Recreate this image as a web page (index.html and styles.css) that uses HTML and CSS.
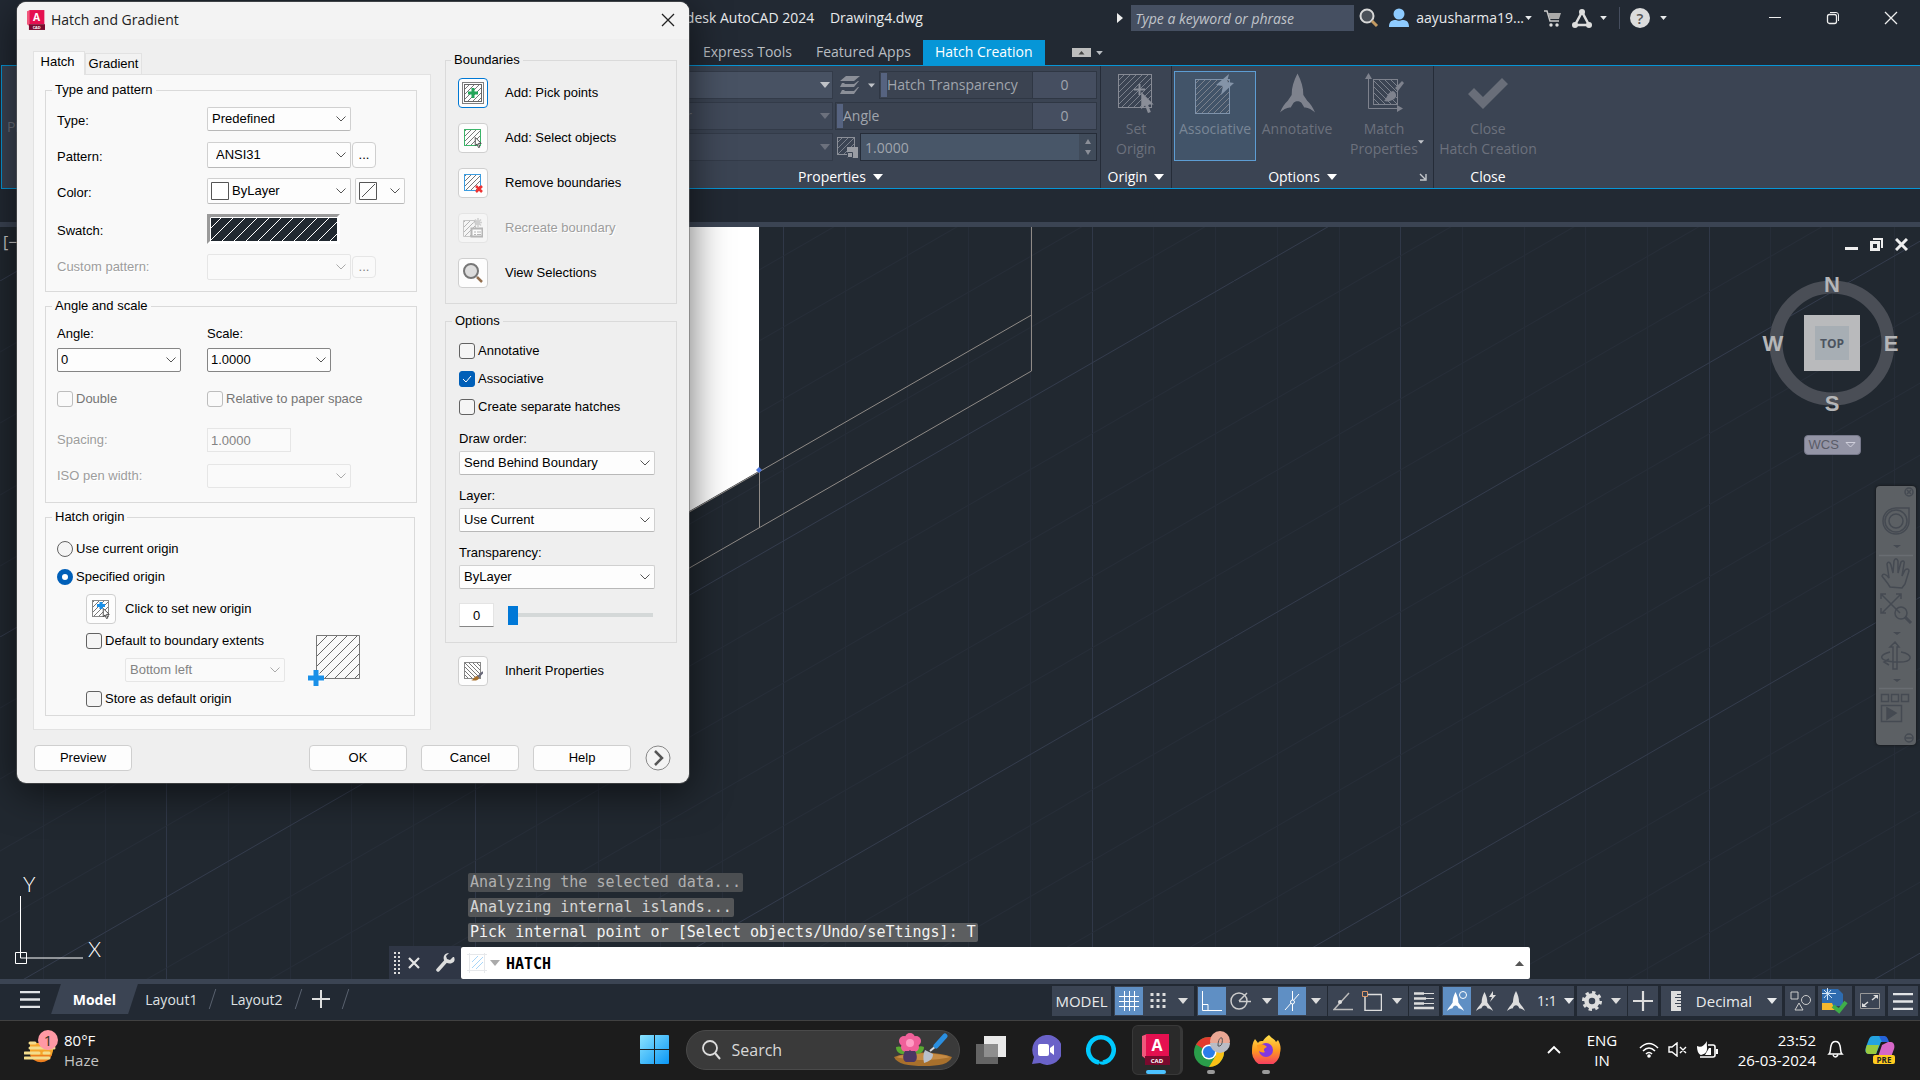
FILE: index.html
```html
<!DOCTYPE html>
<html lang="en">
<head>
<meta charset="utf-8">
<title>Autodesk AutoCAD 2024 - Drawing4.dwg</title>
<link rel="stylesheet" href="styles.css">
</head>
<body>
<svg class="defs" width="0" height="0" aria-hidden="true">
  <defs>
    <pattern id="h-dark" width="5" height="5" patternUnits="userSpaceOnUse"><path d="M-1 6L6-1" stroke="#777" stroke-width="1"/></pattern>
    <pattern id="h-back" width="4" height="4" patternUnits="userSpaceOnUse"><path d="M-1-1L5 5" stroke="#777" stroke-width="1"/></pattern>
    <pattern id="h-light" width="6" height="6" patternUnits="userSpaceOnUse"><path d="M-1 7L7-1" stroke="#7b818c" stroke-width="1"/></pattern>
    <pattern id="h-lback" width="6" height="6" patternUnits="userSpaceOnUse"><path d="M-1-1L7 7" stroke="#7b818c" stroke-width="1"/></pattern>
    <linearGradient id="g-fire" x1="0" y1="0" x2="0" y2="1"><stop offset="0" stop-color="#ffe14a"/><stop offset=".5" stop-color="#ff9a1f"/><stop offset="1" stop-color="#f5316a"/></linearGradient>
    <linearGradient id="g-win" x1="0" y1="0" x2="1" y2="1"><stop offset="0" stop-color="#8be4ff"/><stop offset="1" stop-color="#0a96f5"/></linearGradient>
    <symbol id="acad" viewBox="0 0 28 31">
      <path d="M0 2L5 0v26L0 22z" fill="#f0587c"/><path d="M4 0h23v22H4z" fill="#e51050"/><path d="M3 22h25v9H3z" fill="#7a0a2e"/>
      <text x="15" y="17" text-anchor="middle" font-family="Open Sans" font-weight="700" font-size="16" fill="#fff">A</text>
      <text x="15" y="29" text-anchor="middle" font-family="Open Sans" font-weight="700" font-size="6" fill="#fff">CAD</text>
    </symbol>
    <symbol id="caret" viewBox="0 0 10 6"><path d="M0 0h10L5 6z" fill="currentColor"/></symbol>
    <symbol id="pointer" viewBox="-1 -1 16 24"><path d="M1 0v18l4-4 3 8 3-1-3-8h6z" fill="currentColor"/></symbol>
    <symbol id="anno" viewBox="0 0 36 40"><path d="M18 0c4 8 6 14 6 22l4 6c3 3 6 7 8 12-5-4-8-5-11-5l-3-5c-3-2-5-2-8 0l-3 5c-3 0-6 1-11 5 2-5 5-9 8-12l4-6c0-8 2-14 6-22z" fill="currentColor"/></symbol>
    <symbol id="menu" viewBox="0 0 20 17"><path d="M0 1h20M0 8.500h20M0 16h20" stroke="#e2e4e6" stroke-width="2.500"/></symbol>
  </defs>
</svg>

<header class="titlebar">
  <h1 class="app-title">Autodesk AutoCAD 2024 <span>Drawing4.dwg</span></h1>
  <div class="title-tools">
    <svg class="play" width="6" height="10" viewBox="0 0 6 10"><path d="M0 0l6 5-6 5z" fill="#eee"/></svg>
    <input class="keyword" type="text" placeholder="Type a keyword or phrase" aria-label="Search help">
    <button class="ib w-find" aria-label="Search"><svg width="20" height="20" viewBox="0 0 20 20"><circle cx="8" cy="8" r="6.500" fill="#4a5058" stroke="#d8d8d8" stroke-width="2"/><path d="M13 13l5 5" stroke="#c39a62" stroke-width="3"/></svg></button>
    <button class="account"><svg width="20" height="20" viewBox="0 0 20 20"><circle cx="10" cy="6" r="5.500" fill="#8ecbff"/><path d="M0 19c0-6 3-7 7-7 2 1 4 1 6 0 4 0 7 1 7 7z" fill="#8ecbff"/></svg><span>aayusharma19...</span><svg class="c6" width="7" height="4"><use href="#caret"/></svg></button>
    <button class="ib w-cart" aria-label="Cart"><svg width="17" height="17" viewBox="0 0 17 17"><path d="M0 1h3l3 10h9" fill="none" stroke="#c9c9c9" stroke-width="1.500"/><path d="M4 3h13l-2 6H6z" fill="#aaa"/><circle cx="7" cy="15" r="1.700" fill="#ddd"/><circle cx="13" cy="15" r="1.700" fill="#ddd"/></svg></button>
    <button class="ib w-apps" aria-label="Autodesk App Store"><svg width="20" height="19" viewBox="0 0 20 19"><path d="M10 3L3 16h14z" fill="none" stroke="#ddd" stroke-width="2.500"/><circle cx="10" cy="3" r="3" fill="#ddd"/><circle cx="3" cy="16" r="3" fill="#ddd"/><circle cx="17" cy="16" r="3" fill="#ddd"/></svg><svg width="7" height="4"><use href="#caret"/></svg></button>
    <button class="ib w-help" aria-label="Help"><svg width="20" height="20" viewBox="0 0 20 20"><circle cx="10" cy="10" r="10" fill="#dcdcdc"/><text x="10" y="16" text-anchor="middle" font-family="Open Sans" font-size="15" font-weight="600" fill="#555">?</text></svg><svg width="7" height="4"><use href="#caret"/></svg></button>
    <button class="wb" aria-label="Minimize"><svg width="14" height="14"><path d="M1 6.500h12" stroke="#eee" stroke-width="1"/></svg></button>
    <button class="wb" aria-label="Restore"><svg width="14" height="14"><rect x="1.500" y="3.500" width="9" height="9" rx="2" fill="none" stroke="#eee" stroke-width="1.300"/><path d="M4 1.500h6q2.500 0 2.500 2.500v6" fill="none" stroke="#eee"/></svg></button>
    <button class="wb" aria-label="Close"><svg width="14" height="14"><path d="M1 1l12 12M13 1L1 13" stroke="#eee" stroke-width="1.300"/></svg></button>
  </div>
</header>

<nav class="tabs">
  <a href="#">Express Tools</a>
  <a href="#">Featured Apps</a>
  <a href="#" class="on">Hatch Creation</a>
  <button class="ib w-min" aria-label="Minimize ribbon"><svg width="19" height="9"><path d="M0 0h19v9H0z" fill="#bdbdbd"/><path d="M6.500 6.500h6l-3-3.500z" fill="#444"/></svg><svg width="7" height="4"><use href="#caret"/></svg></button>
</nav>

<section class="ribbon">
  <div class="panel pick"><div class="panel-body"><span>Pick</span></div></div>
  <div class="panel props">
    <div class="panel-body prop-grid">
      <button class="combo lit" aria-label="Hatch color"><svg width="10" height="6"><use href="#caret"/></svg></button>
      <div class="prow">
        <button class="ib w-layers" aria-label="Hatch layer"><svg width="20" height="19" viewBox="0 0 20 19"><path d="M6 0h14l-6 5H0zM2 7h3l-1 1h10l4-3h1l-5 6H0zM2 14h3l-1 1h10l4-4h1l-5 7H0z" fill="#8b8f98"/></svg><svg width="7" height="5"><use href="#caret"/></svg></button>
        <label class="slide">Hatch Transparency</label><output class="val">0</output>
      </div>
      <button class="combo" aria-label="Background color"><span>ByLayer</span><svg width="10" height="6"><use href="#caret"/></svg></button>
      <div class="prow"><label class="slide">Angle</label><output class="val">0</output></div>
      <button class="combo" aria-label="Pattern type"><svg width="10" height="6"><use href="#caret"/></svg></button>
      <div class="prow">
        <svg class="scale-ic" width="21" height="21"><rect x=".5" y=".5" width="17" height="17" fill="url(#h-light)" stroke="#8b8f98"/><path d="M10 10h11v11H10z" fill="#9a9da4"/><path d="M10.500 15.500h5v5h-5z" fill="#9a9da4" stroke="#3b4453"/></svg>
        <input class="scale-in" type="text" value="1.0000" aria-label="Hatch pattern scale">
        <span class="spin"><svg width="6" height="5"><path d="M0 5h6L3 0z" fill="#8b8f98"/></svg><svg width="6" height="5"><path d="M0 0h6L3 5z" fill="#8b8f98"/></svg></span>
      </div>
    </div>
    <div class="panel-name">Properties <svg width="10" height="6"><use href="#caret"/></svg></div>
  </div>
  <div class="panel origin">
    <div class="panel-body">
      <button class="big"><svg width="40" height="42"><rect x="2.500" y="3.500" width="33" height="33" fill="url(#h-light)" stroke="#868a94"/><path d="M18 18.500h11M23.500 13v11" stroke="#8a8e98" stroke-width="2"/><use href="#pointer" x="23" y="20" width="16" height="23" color="#8a8e98"/></svg><span>Set<br>Origin</span></button>
    </div>
    <div class="panel-name">Origin <svg width="10" height="6"><use href="#caret"/></svg></div>
  </div>
  <div class="panel opts">
    <div class="panel-body">
      <button class="big assoc"><svg width="40" height="42"><rect x=".500" y="7.500" width="34" height="34" fill="url(#h-light)" stroke="#7f93ab"/><path d="M34 2L21 13l7 1-2 9 13-12-7-1z" fill="#8494a8"/></svg><span>Associative</span></button>
      <button class="big annot"><svg width="40" height="42"><use href="#anno" x="3" y="2" width="35" height="40" color="#7e828d"/></svg><span>Annotative</span></button>
      <button class="big match"><svg width="40" height="42"><path d="M4.500 5v32.500H36" fill="none" stroke="#7e828d"/><path d="M1 8l3.500-6L8 8zM33 34l6 3.500-6 3.500z" fill="#7e828d"/><rect x="9.500" y="8.500" width="24" height="25" fill="url(#h-lback)" stroke="#7e828d"/><path d="M40 12l-6 8-3-3 7-7zM20 30c3-2 3-9 9-10 4 2 4 6 1 8-3 2-6 3-10 2z" fill="#7e828d"/></svg><span>Match<br>Properties</span><svg class="corner" width="6" height="4"><use href="#caret"/></svg></button>
    </div>
    <div class="panel-name">Options <svg width="10" height="6"><use href="#caret"/></svg><svg class="launch" width="8" height="8"><path d="M1 1l5 5M7 1v6H1" fill="none" stroke="#c5c8cc" stroke-width="1.400"/></svg></div>
  </div>
  <div class="panel close">
    <div class="panel-body">
      <button class="big"><svg width="40" height="42"><path d="M0 23l6-6 9 9L34 7l6 6-25 25z" fill="#696e79"/></svg><span>Close<br>Hatch Creation</span></button>
    </div>
    <div class="panel-name">Close</div>
  </div>
</section>
<div class="filestrip"></div>

<main class="canvas">
  <svg class="drawing" viewBox="0 0 1920 752" preserveAspectRatio="xMinYMin slice" aria-hidden="true">
    <defs>
      <pattern id="iso" x="0" y="54" width="617" height="356" patternUnits="userSpaceOnUse">
        <path d="M43.500 0v356M105.500 0v356M228.500 0v356M290.500 0v356M351.500 0v356M413.500 0v356M536.500 0v356M598.500 0v356" stroke="#262d38"/>
        <path d="M166.500 0v356M475.500 0v356" stroke="#303848"/>
        <path d="M0 71L617-285M0 142L617-214M0 214L617-142M0 285L617-71M0 427L617 71M0 498L617 142M0 570L617 214M0 641L617 285" stroke="#262d38"/>
        <path d="M0 356L617 0" stroke="#333b4c"/>
      </pattern>
    </defs>
    <rect width="1920" height="752" fill="#212830"/>
    <rect width="1920" height="752" fill="url(#iso)"/>
    <path d="M500 0H759V244L500 393z" fill="#fff"/>
    <path d="M1031.500 0V144L500 450M1031.500 88L500 394M759.500 243V301" fill="none" stroke="#8f8a86"/>
    <path d="M759 240l3 3-3 3-3-3z" fill="#4b74d8"/>
    <path d="M20.500 669v62H83M15.500 725.500h11v11h-11z" fill="none" stroke="#fff"/>
    <text x="23" y="665" class="ucs">Y</text><text x="88" y="730" class="ucs">X</text>
    <text x="3" y="21" class="vp">[−]</text>
  </svg>

  <div class="docbtns">
    <button aria-label="Minimize drawing"><svg width="13" height="13"><path d="M0 9h13v3H0z" fill="#eee"/></svg></button>
    <button aria-label="Restore drawing"><svg width="13" height="13"><path d="M1.500 4.500h7v7h-7z" fill="none" stroke="#eee" stroke-width="3"/><path d="M3 1h9v9" fill="none" stroke="#eee" stroke-width="2"/></svg></button>
    <button aria-label="Close drawing"><svg width="13" height="13"><path d="M1 1l11 11M12 1L1 12" stroke="#eee" stroke-width="3"/></svg></button>
  </div>
  <div class="cube">
    <svg width="140" height="148" viewBox="0 0 140 148">
      <circle cx="70" cy="70" r="56" fill="none" stroke="#4a4e56" stroke-width="13"/>
      <path d="M42 42h56v56H42z" fill="#b9babc"/><path d="M53 53h34v34H53z" fill="#a7aeb4"/>
      <g font-family="Liberation Sans" font-weight="700" font-size="22" fill="#b5b6b8" text-anchor="middle"><text x="70" y="19">N</text><text x="70" y="138">S</text><text x="11" y="78">W</text><text x="129" y="78">E</text></g>
      <text x="70" y="75" text-anchor="middle" font-family="Open Sans" font-weight="700" font-size="12" fill="#4c5460">TOP</text>
    </svg>
    <button class="wcs">WCS <svg width="11" height="6" viewBox="0 0 11 6"><path d="M1 .500h9L5.500 5z" fill="none" stroke="#d0d0dc"/></svg></button>
  </div>
  <div class="navbar">
    <svg width="40" height="259" viewBox="0 0 40 259" fill="none" stroke="#454a52" stroke-width="1.500">
      <circle cx="33" cy="6" r="4"/><path d="M31 4l4 4M35 4l-4 4"/>
      <path d="M20 22h13v13a13 13 0 1 1-13-13z"/><circle cx="20" cy="35" r="11"/><circle cx="20" cy="35" r="7"/>
      <path d="M17 59h8l-4 3zM17 146h8l-4 3zM17 193h8l-4 3z" fill="#454a52" stroke="none"/>
      <path d="M3 69.500h34M3 202.500h34" stroke="#696d72"/>
      <path d="M14 101c-3-5-6-8-8-11 1-3 4-2 7 2l-2-14c1-3 3-2 4 1l2 8 1-12c1-3 3-3 4 0v12l3-11c2-2 4-1 3 2l-2 12 3-6c2-2 4-1 4 1l-4 13-3 4z"/>
      <path d="M6 109l18 18M24 109L6 127M5 113v-5h5M20 108h5v5M5 122v5h5"/><circle cx="25" cy="127" r="6"/><path d="M29 131l6 6" stroke-width="3"/>
      <path d="M19 156l4 5h-2v22h-4v-22h-3zM14 166c-12 3-12 9 6 10s18-8 5-10M13 173l-5 3 5 3"/>
      <path d="M5.500 208.500h7v7h-7zM15.500 208.500h7v7h-7zM25.500 208.500h7v7h-7zM5.500 219.500h20v16h-20z"/><path d="M11 222l9 5-9 6z" fill="#454a52"/>
      <circle cx="33" cy="252" r="4"/><path d="M30 252h6"/>
    </svg>
  </div>

  <div class="command">
    <ul class="history"><li class="old">Analyzing the selected data...</li><li class="mid">Analyzing internal islands...</li><li>Pick internal point or [Select objects/Undo/seTtings]: T</li></ul>
    <div class="cmdline">
      <div class="cmdtools">
        <svg width="6" height="22"><path d="M1 0v22M5 0v22" stroke="#ddd" stroke-width="2" stroke-dasharray="2 2"/></svg>
        <button class="ib" aria-label="Close command line"><svg width="12" height="12"><path d="M1 1l10 10M11 1L1 11" stroke="#e4e4e4" stroke-width="2.200"/></svg></button>
        <button class="ib" aria-label="Customize"><svg width="19" height="19" viewBox="0 0 19 19"><path d="M2 17L10 8" stroke="#ddd" stroke-width="3.500" stroke-linecap="round"/><path d="M17 4l-3 3-3-1-1-3 3-3c-5 0-6 4-5 7 2 4 6 4 8 3 3-1 3-4 2-6z" fill="#ddd"/></svg></button>
      </div>
      <div class="cmdbox">
        <svg width="20" height="20"><path d="M0 1.500h20M0 17.500h20M2.500 0v20M17.500 0v20" stroke="#e6e8eb"/><path d="M5 9l6-6M5 15L16 4M9 16l7-7" stroke="#a8d6f8"/></svg>
        <svg class="grey" width="10" height="6"><use href="#caret"/></svg>
        <input type="text" value="HATCH" aria-label="Command">
        <svg width="9" height="5"><path d="M0 5h9L4.500 0z" fill="#555"/></svg>
      </div>
    </div>
  </div>
</main>

<div class="statusbar">
  <div class="layouts">
    <button class="ib w-menu" aria-label="Layout menu"><svg width="20" height="17"><use href="#menu"/></svg></button>
    <a href="#" class="model"><span>Model</span></a>
    <a href="#">Layout1</a><i class="slash"></i><a href="#">Layout2</a><i class="slash"></i>
    <button class="ib w-plus" aria-label="New layout"><svg width="18" height="18"><path d="M9 0v18M0 9h18" stroke="#dedede" stroke-width="2"/></svg></button><i class="slash"></i>
  </div>
  <div class="status">
    <div class="sg"><button class="model-btn">MODEL</button></div>
    <div class="sg"><button class="si on" aria-label="Grid"><svg width="20" height="20"><path d="M5.500 0v20M10.500 0v20M15.500 0v20M0 5.500h20M0 10.500h20M0 15.500h20" stroke="#fff"/></svg></button><button class="si" aria-label="Snap"><svg width="16" height="16"><path d="M2 0v16M8 0v16M14 0v16" stroke="#ddd" stroke-width="3" stroke-dasharray="3 3"/></svg></button><button class="sc" aria-label="Snap menu"><svg width="10" height="6"><use href="#caret"/></svg></button></div>
    <div class="sg"><button class="si on" aria-label="Ortho"><svg width="20" height="20"><path d="M.5 0v19.500H20M.5 13.500h5.500v6" fill="none" stroke="#fff"/></svg></button><button class="si" aria-label="Polar"><svg width="22" height="20"><circle cx="9" cy="10" r="8" fill="none" stroke="#ccc" stroke-width="1.500"/><path d="M9 10.500h12M9 10l8-8" stroke="#ccc" stroke-width="1.500"/></svg></button><button class="sc roomy" aria-label="Polar menu"><svg width="10" height="6"><use href="#caret"/></svg></button><button class="si on" aria-label="Isometric"><svg width="20" height="20"><path d="M10.500 0v20M3 19L17 3" stroke="#fff"/><circle cx="10.500" cy="11" r="2" fill="#5f8fc4" stroke="#fff"/></svg></button><button class="sc" aria-label="Isometric menu"><svg width="10" height="6"><use href="#caret"/></svg></button></div>
    <div class="sg join"><button class="si" aria-label="Tracking"><svg width="20" height="20"><path d="M20 18.500H1L16 2" fill="none" stroke="#bbb" stroke-width="1.500"/><circle cx="7" cy="11" r="2" fill="#ddd"/></svg></button><button class="si" aria-label="Object snap"><svg width="20" height="20"><path d="M6 3.500h13.500v16H3V6" fill="none" stroke="#ddd" stroke-width="1.500"/><path d="M.5.500h5v5h-5z" fill="none" stroke="#e09a6a"/></svg></button><button class="sc" aria-label="Snap settings"><svg width="10" height="6"><use href="#caret"/></svg></button></div>
    <div class="sg join"><button class="si" aria-label="Lineweight"><svg width="20" height="18"><path d="M0 1.500h10M0 6.500h12M0 11.500h10M0 16h20" stroke="#ddd" stroke-width="2.500"/><path d="M10 1.500h10M12 6.500h8M10 11.500h10" stroke="#ddd"/></svg></button></div>
    <div class="sg"><button class="si on" aria-label="Annotation visibility"><svg width="20" height="20"><use href="#anno" x="0" y="1" width="17" height="19" color="#fff"/><circle cx="16" cy="4" r="3.500" fill="#5f8fc4" stroke="#fff"/></svg></button><button class="si" aria-label="Auto scale"><svg width="20" height="20"><use href="#anno" x="0" y="1" width="17" height="19" color="#ddd"/><path d="M17 0l-4 6h3l-2 5 6-7h-3z" fill="#ddd"/></svg></button><button class="si" aria-label="Annotation scale"><svg width="18" height="20"><use href="#anno" width="18" height="20" color="#ddd"/></svg></button><button class="ratio">1:1 <svg width="10" height="6"><use href="#caret"/></svg></button></div>
    <div class="sg"><button class="si" aria-label="Workspace"><svg width="20" height="20"><circle cx="10" cy="10" r="8.500" fill="none" stroke="#ddd" stroke-width="3" stroke-dasharray="3.300 3.350"/><circle cx="10" cy="10" r="5.500" fill="none" stroke="#ddd" stroke-width="4.500"/></svg></button><button class="sc" aria-label="Workspace menu"><svg width="10" height="6"><use href="#caret"/></svg></button></div>
    <div class="sg join"><button class="si" aria-label="Annotation monitor"><svg width="20" height="20"><path d="M10 0v20M0 10h20" stroke="#ddd" stroke-width="2.200"/></svg></button></div>
    <div class="sg"><button class="units"><svg width="10" height="20"><path d="M0 0h10v20H0z" fill="#ddd"/><path d="M6 3.500h4M4 6.500h6M6 9.500h4M4 12.500h6M6 15.500h4" stroke="#3b4453"/></svg><span>Decimal</span><svg width="10" height="6"><use href="#caret"/></svg></button></div>
    <div class="sg"><button class="si" aria-label="Isolate"><svg width="21" height="20"><path d="M1 1h7v7H1zM5 19l4-7 4 7z" fill="none" stroke="#ccc"/><circle cx="16" cy="9" r="4.500" fill="none" stroke="#ccc"/></svg></button></div>
    <div class="sg"><button class="si wide" aria-label="Trusted file"><svg width="26" height="26"><path d="M0 1h16l5 5v12H0z" fill="#2e6cb0"/><path d="M0 5.500h14M5.500 0v12M2 2l8 8M9 2l-7 8" stroke="#cfe4f7"/><path d="M0 15h10l3 7H0z" fill="#f5b82e"/><path d="M11 18l6 5 7-9" fill="none" stroke="#3fae49" stroke-width="4"/></svg></button></div>
    <div class="sg"><button class="si" aria-label="Clean screen"><svg width="20" height="16"><path d="M.5.500h19v15H.5z" fill="none" stroke="#999"/><path d="M12 7l5-4M8 9l-5 4" stroke="#ddd" stroke-width="1.500"/><path d="M13 2h5v4zM2 10v4h5z" fill="#ddd"/></svg></button></div>
    <div class="sg"><button class="si" aria-label="Customization"><svg width="20" height="17"><use href="#menu"/></svg></button></div>
  </div>
</div>

<footer class="taskbar">
  <button class="weather">
    <svg width="34" height="38" viewBox="0 0 34 38"><path d="M6 24a12 12 0 0 0 23-3v-8H6z" fill="#f5a52c"/><path d="M6 25a12 12 0 0 0 22 0z" fill="#ee7f1e"/><path d="M6 13h5M6 18h24M1 23h14M20 23h5M1 28h24" stroke="#f3dc8c" stroke-width="3" stroke-linecap="round"/><circle cx="24" cy="10" r="10" fill="#ff99a4"/><text x="24" y="16" text-anchor="middle" font-family="Open Sans" font-size="15" fill="#332">1</text></svg>
    <span>80°F<br><em>Haze</em></span>
  </button>
  <div class="apps">
    <button class="app" aria-label="Start"><svg width="29" height="29"><path d="M0 1q0-1 1-1h13v14H0zM15 0h13q1 0 1 1v13H15zM0 15h14v14H1q-1 0-1-1zM15 15h14v13q0 1-1 1H15z" fill="url(#g-win)"/></svg></button>
    <div class="search"><svg width="20" height="20"><circle cx="8" cy="8" r="7" fill="none" stroke="#ddd" stroke-width="1.800"/><path d="M13 13l5 6" stroke="#ddd" stroke-width="2"/></svg><input type="search" placeholder="Search" aria-label="Search">
      <svg width="60" height="34" viewBox="0 0 60 34"><path d="M1 24c16-6 42-6 58 0-3 7-12 9-28 9S4 31 1 24z" fill="#a8702c"/><path d="M3 24c16-5 38-5 54 0-14 4-40 4-54 0z" fill="#c58b45"/><path d="M3 14c6-2 9 2 10 7-6 1-10-2-10-7zM22 20c1-6 5-8 9-6 0 5-4 8-9 6z" fill="#5aa832"/><g fill="#f0609a"><circle cx="17" cy="5" r="5"/><circle cx="11" cy="8" r="5"/><circle cx="23" cy="8" r="5"/><circle cx="13" cy="14" r="5"/><circle cx="21" cy="14" r="5"/></g><circle cx="17" cy="10" r="4" fill="#ff9cc4"/><path d="M12 18h10c3 5 2 10-1 11h-8c-3-1-4-6-1-11z" fill="#4b3763"/><path d="M32 17l8 4c0 5-3 7-9 9-1-5-1-9 1-13z" fill="#b9c0cc"/><path d="M37 18l6-5" stroke="#d8dde5" stroke-width="2"/><path d="M43 13l9-10" stroke="#2b8fe0" stroke-width="5" stroke-linecap="round"/></svg></div>
    <button class="app" aria-label="Task view"><svg width="30" height="30"><path d="M8 1h22v21H8z" fill="#e9e9e9"/><path d="M0 9h22v20H0z" fill="#777" opacity=".8"/></svg></button>
    <button class="app" aria-label="Chat"><svg width="30" height="30"><path d="M15 0a15 15 0 1 1-6 28l-8 1 2-7A15 15 0 0 1 15 0z" fill="#6a62c8"/><rect x="7" y="9" width="11" height="12" rx="2" fill="#fff"/><path d="M19 13l4-3v10l-4-3z" fill="#fff"/></svg></button>
    <button class="app" aria-label="Alexa"><svg width="30" height="30"><path d="M13 27.500A12.700 12.700 0 1 1 17 27.500q-2 0-2-1" fill="none" stroke="#00caff" stroke-width="4.500"/></svg></button>
    <button class="app active" aria-label="AutoCAD"><svg width="28" height="31"><use href="#acad"/></svg></button>
    <button class="app open" aria-label="Chrome"><svg width="38" height="38" viewBox="0 0 38 38"><circle cx="17" cy="21" r="15" fill="#2a9d4a"/><path d="M17 21L4 13.500A15 15 0 0 1 30 13.500H17z" fill="#e33b2e"/><path d="M17 13.500h13A15 15 0 0 1 17 36l6.500-11z" fill="#fbc116"/><circle cx="17" cy="21" r="7.500" fill="#fff"/><circle cx="17" cy="21" r="6" fill="#2b7de9"/><circle cx="28" cy="10" r="10" fill="#e9a794"/><path d="M18 12a10 10 0 0 0 20 0z" fill="#b9bcc6"/><path d="M26 15c0-6 2-9 4-8 1 3 0 7-2 8z" fill="none" stroke="#555"/></svg></button>
    <button class="app open" aria-label="Firefox"><svg width="29" height="29" viewBox="0 0 29 29"><path d="M17 0c2 3 6 4 7 7l2-2c3 5 3 9 2 13a14 14 0 0 1-28-2C0 10 1 7 3 4l3 4c1-2 3-2 5-2 1-2 3-4 6-6z" fill="url(#g-fire)"/><circle cx="14" cy="15" r="7" fill="#8138e0"/><path d="M5 10c6-2 8 0 10 2-3 1-4 3-2 5-4 2-8-2-8-7z" fill="#ff9a1f"/></svg></button>
  </div>
  <div class="tray">
    <svg class="up" width="14" height="9"><path d="M1 8l6-6 6 6" fill="none" stroke="#fff" stroke-width="1.800"/></svg>
    <span class="lang">ENG<br>IN</span>
    <div class="net">
      <svg width="20" height="16" fill="none" stroke="#fff" stroke-width="1.600"><path d="M1 6q9-9 18 0M4 9q6-6 12 0M7 12q3-3 6 0"/><circle cx="10" cy="14" r="1" fill="#fff"/></svg>
      <svg width="20" height="15" fill="none" stroke="#fff" stroke-width="1.400"><path d="M1 5h3l5-4v13l-5-4H1zM12 5l6 6M18 5l-6 6"/></svg>
      <svg width="21" height="18"><path d="M11 4h5q2 0 2 2v8q0 2-2 2H3" fill="none" stroke="#fff" stroke-width="1.600"/><path d="M10 0C9 6 13 12 4 14 1 13 0 9 0 5c4 2 7 0 10-5zM19 8h2v5h-2z" fill="#fff"/><path d="M8 14l4-7h2v7z" fill="#fff"/></svg>
    </div>
    <span class="clock">23:52<br>26-03-2024</span>
    <svg class="bell" width="17" height="19"><path d="M2 14c2-2 1-5 2-8 1-6 8-6 9 0 1 3 0 6 2 8zM6 15q2 4 5 0" fill="none" stroke="#fff" stroke-width="1.500"/></svg>
    <svg class="copilot" width="31" height="30" viewBox="0 0 31 30"><path d="M8 1h10c3 0 4 3 5 6h-7L11 19H4c-4 0-4-4-3-7L4 4c1-2 2-3 4-3z" fill="#25a3e0"/><path d="M2 10h12l-3 9H4c-4 0-4-4-2-9z" fill="#9acb3f"/><path d="M23 7h3c3 0 4 4 3 7l-3 8H13l4-12z" fill="#d667c8"/><path d="M14 1h5c3 0 4 3 5 6h-7z" fill="#2563d9"/><rect x="8" y="20" width="22" height="9" rx="2" fill="#ffcb1f"/><text x="19" y="28" text-anchor="middle" font-family="Open Sans" font-weight="700" font-size="8" fill="#222">PRE</text></svg>
  </div>
</footer>

<form class="dialog" onsubmit="return false">
  <div class="dlg-title"><svg width="18" height="20"><use href="#acad"/></svg><h2>Hatch and Gradient</h2><button type="button" class="ib" aria-label="Close dialog"><svg width="14" height="14"><path d="M1 1l12 12M13 1L1 13" stroke="#222" stroke-width="1.300"/></svg></button></div>
  <div class="dlg-body">
    <div class="dlg-left">
      <div class="dlg-tabs"><button type="button" class="cur">Hatch</button><button type="button">Gradient</button></div>
      <div class="sheet">
        <fieldset class="f-type">
          <legend>Type and pattern</legend>
          <label for="type">Type:</label><div class="cell"><select id="type" class="w-l"><option>Predefined</option></select></div>
          <label for="pattern">Pattern:</label><div class="cell"><select id="pattern" class="w-l tall pad"><option>ANSI31</option></select><button type="button" class="dots">...</button></div>
          <label for="color">Color:</label><div class="cell wider"><select id="color" class="w-l tall chip"><option>ByLayer</option></select><select class="bgcolor tall" aria-label="Background color"><option></option></select></div>
          <span class="lbl">Swatch:</span><div class="swatch"><svg width="127" height="24"><defs><pattern id="sw" width="12" height="12" patternUnits="userSpaceOnUse"><path d="M-1 13L13-1" stroke="#fff"/></pattern></defs><rect width="127" height="24" fill="#212830"/><rect width="127" height="24" fill="url(#sw)"/><path d="M.500 24V.500H127" fill="none" stroke="#fff"/></svg></div>
          <label for="custom" class="off">Custom pattern:</label><div class="cell"><select id="custom" class="w-l tall" disabled><option></option></select><button type="button" class="dots" disabled>...</button></div>
        </fieldset>
        <fieldset class="f-angle">
          <legend>Angle and scale</legend>
          <label class="head" for="angle">Angle:</label><label class="head" for="scale">Scale:</label>
          <select id="angle" class="w-m strong"><option>0</option></select><select id="scale" class="w-m strong"><option>1.0000</option></select>
          <label class="chk off2"><input type="checkbox" disabled>Double</label><label class="chk off2"><input type="checkbox" disabled>Relative to paper space</label>
          <label for="spacing" class="off">Spacing:</label><input id="spacing" class="w-s" type="text" value="1.0000" disabled>
          <label for="iso-pen" class="off">ISO pen width:</label><select id="iso-pen" class="w-l" disabled><option></option></select>
        </fieldset>
        <fieldset class="f-origin">
          <legend>Hatch origin</legend>
          <label class="chk"><input type="radio" name="o">Use current origin</label>
          <label class="chk"><input type="radio" name="o" checked>Specified origin</label>
          <div class="origin-more">
            <div class="origin-col">
              <label class="tool"><button type="button" aria-label="Click to set new origin"><svg width="20" height="20"><rect x="1.500" y="1.500" width="16" height="16" fill="url(#h-dark)" stroke="#888"/><path d="M6 6.500h8M10 3v7" stroke="#1a90e8" stroke-width="3"/><use href="#pointer" x="11" y="9" width="8" height="11" color="#fff" stroke="#444" stroke-width="2"/></svg></button>Click to set new origin</label>
              <label class="chk"><input type="checkbox">Default to boundary extents</label>
              <select class="corner-sel" aria-label="Boundary corner" disabled><option>Bottom left</option></select>
              <label class="chk"><input type="checkbox">Store as default origin</label>
            </div>
            <svg class="preview" width="52" height="52" viewBox="0 0 52 52"><defs><pattern id="pv" width="10" height="10" patternUnits="userSpaceOnUse"><path d="M-1 11L11-1" stroke="#666"/></pattern></defs><path d="M8.500.500h43v43h-43z" fill="url(#pv)" stroke="#777"/><path d="M0 43h16M8 35v16" stroke="#fff" stroke-width="7"/><path d="M0 43h16M8 35v16" stroke="#1a90e8" stroke-width="5"/></svg>
          </div>
        </fieldset>
      </div>
    </div>
    <div class="dlg-right">
      <fieldset class="f-bounds">
        <legend>Boundaries</legend>
        <label class="tool"><button type="button" class="focus" aria-label="Add: Pick points"><svg width="22" height="22"><rect x=".5" y=".5" width="21" height="21" fill="none" stroke="#000" stroke-dasharray="1 1"/><rect x="2.500" y="2.500" width="17" height="17" fill="url(#h-dark)" stroke="#666"/><path d="M6 11h10M11 6v10" stroke="#23a559" stroke-width="3"/></svg></button>Add: Pick points</label>
        <label class="tool"><button type="button" aria-label="Add: Select objects"><svg width="20" height="20"><rect x="1.500" y="1.500" width="16" height="16" fill="url(#h-dark)" stroke="#3cb56a"/><use href="#pointer" x="11" y="9" width="8" height="11" color="#fff" stroke="#444" stroke-width="2"/></svg></button>Add: Select objects</label>
        <label class="tool"><button type="button" aria-label="Remove boundaries"><svg width="20" height="20"><rect x="1.500" y="1.500" width="16" height="16" fill="url(#h-dark)" stroke="#3c9de0"/><path d="M13 13l6 6M19 13l-6 6" stroke="#e33" stroke-width="2.500"/></svg></button>Remove boundaries</label>
        <label class="tool off"><button type="button" disabled aria-label="Recreate boundary"><svg width="20" height="20" opacity=".5"><path d="M.5 2.500h12v16H.5z" fill="url(#h-dark)" stroke="#999"/><path d="M15 0v9M10 4.500h9M12 1.500l6 6M18 1.500l-6 6" stroke="#aaa" stroke-width="1.500"/><rect x="8.500" y="10.500" width="11" height="8" fill="#fff" stroke="#777" stroke-width="2"/><path d="M11 14h2M14 14h4M11 16.500h2M14 16.500h4" stroke="#777"/></svg></button>Recreate boundary</label>
        <label class="tool"><button type="button" aria-label="View Selections"><svg width="20" height="20"><circle cx="8" cy="8" r="7" fill="#ddd" stroke="#777" stroke-width="2"/><path d="M14 14l5 5" stroke="#947050" stroke-width="2.500"/></svg></button>View Selections</label>
      </fieldset>
      <fieldset class="f-opts">
        <legend>Options</legend>
        <label class="chk"><input type="checkbox">Annotative</label>
        <label class="chk"><input type="checkbox" checked>Associative</label>
        <label class="chk"><input type="checkbox">Create separate hatches</label>
        <div class="field"><label for="order">Draw order:</label><select id="order"><option>Send Behind Boundary</option></select></div>
        <div class="field"><label for="layer">Layer:</label><select id="layer"><option>Use Current</option></select></div>
        <div class="field"><label for="transp">Transparency:</label><select id="transp"><option>ByLayer</option></select></div>
        <div class="trow"><input class="tval" type="text" value="0" aria-label="Transparency value"><input class="tslide" type="range" min="0" max="90" value="0" aria-label="Transparency"></div>
      </fieldset>
      <label class="tool inherit"><button type="button" aria-label="Inherit Properties"><svg width="20" height="20"><rect x="1.500" y="1.500" width="16" height="16" fill="url(#h-back)" stroke="#888"/><path d="M20 11l-6 6" stroke="#667" stroke-width="2"/><path d="M8 19c3 0 3-4 6-4l2 2c-1 3-5 3-8 2z" fill="#a8702c"/></svg></button>Inherit Properties</label>
    </div>
  </div>
  <div class="dlg-foot"><button type="button" class="push">Preview</button><button type="button" class="push first">OK</button><button type="button" class="push">Cancel</button><button type="button" class="push">Help</button><button type="button" class="more" aria-label="More options"><svg width="26" height="26"><circle cx="13" cy="13" r="12" fill="#f3f3f3" stroke="#888"/><path d="M10 6l7 7-7 7" fill="none" stroke="#555" stroke-width="2.500"/></svg></button></div>
</form>
</body>
</html>
```
FILE: styles.css
```css
* { box-sizing: border-box; }
body {
  margin: 0;
  min-height: 100vh;
  display: flex;
  flex-direction: column;
  position: relative;
  background: #222933;
  color: #e8eaec;
  font: 14px/20px "Open Sans", "Noto Sans", sans-serif;
  overflow-x: hidden;
}
button { font: inherit; color: inherit; background: none; border: 0; padding: 0; margin: 0; }
a { color: inherit; text-decoration: none; }
h1, h2 { margin: 0; font-weight: 400; }
svg { display: block; flex: none; }
.defs { position: absolute; }
.ib { display: flex; align-items: center; justify-content: center; gap: 10px; }

/* Title bar */
.titlebar { display: flex; height: 36px; align-items: center; }
.app-title { margin-left: 655px; font-size: 14px; white-space: nowrap; }
.app-title span { margin-left: 12px; }
.title-tools { margin-left: auto; display: flex; align-items: center; }
.keyword {
  width: 223px; height: 26px; margin: 0 5px 0 8px; padding: 0 4px;
  background: #454f61; border: 0; color: #c5c9cf;
  font: italic 14px/20px "Open Sans", sans-serif;
}
.keyword::placeholder { color: #c0c4ca; opacity: 1; }
.w-find { width: 20px; }
.account { display: flex; align-items: center; gap: 7px; margin-left: 10px; }
.account .c6 { margin-left: -6px; }
.w-cart { margin-left: 12px; }
.w-apps { margin-left: 11px; padding-right: 12px; height: 22px; border-right: 1px solid #454d5e; gap: 8px; }
.w-help { margin-left: 10px; margin-right: 79px; }
.wb { width: 58px; display: flex; justify-content: center; }

/* Ribbon tabs */
.tabs { display: flex; height: 29px; align-items: flex-end; padding-left: 691px; color: #b9bdc2; }
.tabs a { padding: 2px 12px 3px; height: 25px; white-space: nowrap; }
.tabs a.on { background: #0696d7; color: #fff; }
.tabs .w-min { height: 25px; margin-left: 27px; gap: 5px; }

/* Ribbon */
.ribbon {
  display: flex; height: 124px; background: #3b4453;
  border-top: 1px solid #0696d7; border-bottom: 1px solid #0696d7; border-left: 1px solid #0696d7;
  margin-left: 1px;
}
.panel { display: flex; flex-direction: column; border-right: 1px solid #252c38; }
.panel-body { flex: 1; display: flex; padding-top: 5px; color: #6c717d; }
.panel-name { position: relative; height: 24px; padding-top: 2px; display: flex; gap: 7px; align-items: center; justify-content: center; color: #fff; }
.pick { width: 579px; }
.pick .panel-body { padding: 51px 0 0 5px; }
.props { width: 520px; }
.prop-grid { display: grid; grid-template-columns: 234px 262px; gap: 3px 2px; padding-left: 18px; padding-top: 5px; align-content: start; }
.combo, .prow { height: 28px; display: flex; align-items: center; }
.combo { justify-content: flex-end; gap: 128px; padding-right: 2px; border: 1px solid #333b49; background: #404959; color: #6c717d; }
.combo.lit { background: #485263; color: #c0c3c8; }
.slide { flex: 1; height: 28px; padding: 3px 0 0 7px; border: 1px solid #2f3744; color: #a0a5ad; background: linear-gradient(#566380, #566380) 1px 1px / 6px 24px no-repeat #3b4351; }
.val { width: 64px; height: 28px; padding-top: 3px; border: 1px solid #2f3744; border-left: 0; text-align: center; color: #a0a5ad; background: #454e60; }
.w-layers { width: 44px; gap: 8px; color: #c0c3c8; }
.scale-ic { margin: 0 2px; }
.scale-in { flex: 1; min-width: 0; height: 28px; padding: 0 4px; border: 1px solid #252c38; border-right: 0; background: #485668; color: #a0a5ad; font: inherit; }
.spin { width: 18px; height: 28px; display: flex; flex-direction: column; gap: 6px; align-items: center; justify-content: center; border: 1px solid #252c38; border-left: 0; background: #404b5a; }
.origin { width: 71px; }
.origin .panel-body, .close .panel-body { justify-content: center; }
.opts { width: 262px; }
.close { width: 108px; border-right: 0; }
.big { position: relative; display: flex; flex-direction: column; align-items: center; gap: 6px; height: 90px; line-height: 20px; white-space: nowrap; }
.assoc { width: 82px; margin-left: 2px; border: 1px solid #5d9dd3; background: #425469; color: #798696; gap: 5px; }
.annot { width: 82px; }
.match { width: 92px; }
.corner { position: absolute; right: 6px; top: 69px; color: #c0c3c8; }
.launch { position: absolute; right: 6px; top: 9px; }
.filestrip { height: 38px; border-bottom: 5px solid #3b4453; }

/* Drawing area */
.canvas { position: relative; flex: 1; min-height: 500px; overflow: hidden; }
.drawing { position: absolute; inset: 0; width: 100%; height: 100%; }
.ucs { font: 300 21px Lato, sans-serif; fill: #fff; }
.vp { font: 16px "Open Sans", sans-serif; fill: #ccc; }
.docbtns { position: absolute; right: 12px; top: 11px; display: flex; gap: 12px; }
.cube { position: absolute; right: 18px; top: 46px; display: flex; flex-direction: column; align-items: center; gap: 14px; }
.wcs { display: flex; align-items: center; justify-content: space-between; height: 20px; width: 57px; padding: 0 4px; border: 1px solid #76788a; border-radius: 4px; background: #9495a6; color: #5a5c68; font: 13px/18px "Liberation Sans", sans-serif; }
.navbar { position: absolute; right: 4px; top: 259px; border-radius: 4px; background: #5c6064; box-shadow: 0 0 3px #111; }

/* Command line */
.command { position: absolute; left: 389px; right: 390px; bottom: 0; font: 15px/19px "DejaVu Sans Mono", monospace; }
.history { list-style: none; margin: 0 0 4px 79px; padding: 0; display: flex; flex-direction: column; align-items: flex-start; gap: 6px; }
.history li { height: 19px; padding: 0 2px; border-radius: 2px; background: #5c5e60; color: #f2f2f2; white-space: nowrap; }
.history .old { background: #4b4e51; color: #b0b0b0; }
.history .mid { background: #545658; color: #d6d6d6; }
.cmdline { display: flex; height: 33px; }
.cmdtools { width: 72px; display: flex; align-items: center; gap: 8px; padding-left: 5px; background: #2f3645; }
.cmdtools .ib:last-child { margin-left: 8px; }
.cmdbox { flex: 1; display: flex; align-items: center; gap: 3px; margin-top: 1px; padding: 0 6px; background: #fff; border-radius: 2px; }
.cmdbox .grey { color: #aaa; }
.cmdbox input { flex: 1; min-width: 0; border: 0; padding: 2px 3px 0; background: none; color: #000; font: 700 15px/19px "DejaVu Sans Mono", monospace; outline: none; }

/* Layout tabs and status bar */
.statusbar { display: flex; justify-content: space-between; height: 42px; border-top: 5px solid #3b4453; border-bottom: 1px solid #414141; background: #222933; }
.layouts { display: flex; height: 30px; align-items: center; color: #dfe1e4; }
.w-menu { margin-left: 20px; }
.layouts a { padding: 3px 9px 2px; }
.layouts .model { display: flex; align-items: center; height: 30px; margin: 0 3px 0 16px; padding: 2px 17px 0; background: #3b4453; color: #fff; font-weight: 700; transform: skewX(-18deg); }
.model span { transform: skewX(18deg); }
.slash { width: 1px; height: 20px; margin: 0 8px 0 6px; background: #5a6270; transform: skewX(-18deg); }
.w-plus { margin: 0 9px 0 5px; }
.status { display: flex; gap: 3px; padding: 2px 2px 0 0; font-size: 15px; }
.sg { display: flex; height: 30px; padding: 1px; background: #3b4453; }
.sg.join { margin-left: -2px; }
.si { width: 28px; height: 28px; display: flex; align-items: center; justify-content: center; }
.si.on { background: #5f8fc4; }
.si + .si { width: 30px; }
.si.wide { width: 32px; }
.sc { width: 20px; display: flex; align-items: center; justify-content: center; color: #ddd; }
.sc.roomy { width: 22px; }
.model-btn { width: 57px; }
.ratio { display: flex; align-items: center; gap: 7px; width: 42px; padding-left: 6px; font-size: 14px; white-space: nowrap; }
.units { display: flex; align-items: center; width: 119px; padding: 0 4px 0 9px; }
.units span { margin: 0 auto; }

/* Taskbar */
.taskbar { display: grid; grid-template-columns: 1fr auto 1fr; height: 59px; padding-bottom: 2px; background: #1c1c1c; align-items: center; font-size: 15px; }
.weather { display: flex; gap: 6px; margin-left: 24px; text-align: left; color: #fff; justify-self: start; }
.weather em { font-style: normal; color: #c4c4c4; }
.apps { display: flex; align-items: center; }
.app { position: relative; width: 55px; height: 50px; display: flex; align-items: center; justify-content: center; }
.app.active { border: 1px solid #383838; border-width: 1px 3px 1px 1px; border-radius: 6px; width: 51px; margin: 0 1px 0 3px; background: #2a2a2a; }
.app.active::after, .app.open::after { content: ""; position: absolute; bottom: 1px; left: 50%; width: 8px; margin-left: -4px; height: 4px; border-radius: 2px; background: #9a9a9a; }
.app.active::after { width: 20px; margin-left: -10px; background: #4cc2ff; bottom: 0; }
.search { width: 274px; height: 40px; margin: 0 4px; padding: 0 6px 0 15px; display: flex; align-items: center; gap: 10px; border-radius: 20px; background: #3a3a3a; border: 1px solid #4a4a4a; }
.search input { flex: 1; min-width: 0; border: 0; padding: 0; background: none; font: 16px/20px "Open Sans", sans-serif; color: #ddd; }
.search input::placeholder { color: #d8d8d8; opacity: 1; }
.tray { display: flex; align-items: center; justify-self: end; color: #fff; padding-right: 24px; }
.lang { width: 40px; margin-left: 21px; text-align: center; }
.net { display: flex; gap: 9px; align-items: center; margin-left: 17px; }
.clock { text-align: right; width: 98px; }
.bell { margin: 0 21px 0 11px; }

/* Hatch and Gradient dialog */
.dialog {
  position: absolute; left: 17px; top: 2px; width: 672px;
  background: #efefef; color: #000; border-radius: 9px;
  box-shadow: 0 0 0 1px rgba(100, 100, 100, .5), 0 8px 40px rgba(0, 0, 0, .6);
  font: 13px/16px "Liberation Sans", Arial, sans-serif;
}
.dlg-title { display: flex; align-items: center; height: 37px; padding: 0 14px 2px 10px; background: #f3f3f3; border-radius: 9px 9px 0 0; }
.dlg-title h2 { flex: 1; margin-left: 6px; font: 14px/20px "Open Sans", sans-serif; color: #222; }
.dlg-body { display: flex; gap: 14px; padding: 12px 12px 0 16px; }
.dlg-left { width: 398px; }
.dlg-tabs { display: flex; align-items: flex-end; height: 23px; }
.dlg-tabs button { height: 21px; width: 57px; border: 1px solid #e2e2e2; border-bottom: 0; background: #f2f2f2; }
.dlg-tabs .cur { width: 52px; height: 24px; margin-bottom: -1px; padding: 0 3px 3px 0; background: #f9f9f9; z-index: 1; }
.sheet { border: 1px solid #e2e2e2; background: #f9f9f9; padding: 7px 13px 13px 11px; }
fieldset { min-width: 0; margin: 0; border: 1px solid #dadada; padding: 0 0 0 11px; }
legend { height: 16px; padding: 0 3px; margin-left: -5px; }
.sheet fieldset + fieldset { margin-top: 6px; }
.f-type { display: grid; grid-template-columns: 150px auto; row-gap: 10px; align-items: center; padding-top: 8px; padding-bottom: 11px; }
.f-type > label, .f-type > .lbl { padding-top: 4px; }
.f-type > .off { padding-top: 0; }
.cell { display: flex; align-items: center; gap: 1px; height: 26px; }
.cell.wider { gap: 4px; }
.off { color: #9d9d9d; text-shadow: 1px 1px #fff; }
.off2 { color: #757575; }
select {
  appearance: none; height: 24px; padding: 0 24px 0 4px; margin: 0;
  border: 1px solid #d0d0d0; border-bottom-color: #b8b8b8; border-radius: 2px; color: #000;
  background: #fdfdfd url("data:image/svg+xml,%3Csvg xmlns='http://www.w3.org/2000/svg' width='10' height='6'%3E%3Cpath d='M.5.5L5 5 9.500.5' fill='none' stroke='%23555'/%3E%3C/svg%3E") right 4px center no-repeat;
  font: 13px/16px "Liberation Sans", Arial, sans-serif;
}
select:disabled { opacity: 1; color: #838383; background-color: #fafafa; border-color: #e6e6e6; background-image: url("data:image/svg+xml,%3Csvg xmlns='http://www.w3.org/2000/svg' width='10' height='6'%3E%3Cpath d='M.5.5L5 5 9.500.5' fill='none' stroke='%23aaa'/%3E%3C/svg%3E"); }
select.tall { height: 26px; }
select.pad { padding-left: 8px; }
select.strong { border-color: #858585; padding-left: 3px; }
select.chip, select.bgcolor { background-position: left 3px center, right 4px center; background-repeat: no-repeat; }
select.chip { padding-left: 24px; background-image: url("data:image/svg+xml,%3Csvg xmlns='http://www.w3.org/2000/svg' width='18' height='18'%3E%3Cpath d='M.5.5h17v17H.5z' fill='%23fff' stroke='%23555'/%3E%3C/svg%3E"), url("data:image/svg+xml,%3Csvg xmlns='http://www.w3.org/2000/svg' width='10' height='6'%3E%3Cpath d='M.5.5L5 5 9.500.5' fill='none' stroke='%23555'/%3E%3C/svg%3E"); }
select.bgcolor { width: 50px; padding: 0; background-image: url("data:image/svg+xml,%3Csvg xmlns='http://www.w3.org/2000/svg' width='18' height='18'%3E%3Cpath d='M.5.5h17v17H.5zM3 15L16 2' fill='none' stroke='%23555'/%3E%3C/svg%3E"), url("data:image/svg+xml,%3Csvg xmlns='http://www.w3.org/2000/svg' width='10' height='6'%3E%3Cpath d='M.5.5L5 5 9.500.5' fill='none' stroke='%23555'/%3E%3C/svg%3E"); }
.w-l { width: 144px; }
.w-m { width: 124px; }
.w-s { width: 84px; height: 24px; padding: 0 3px; border: 1px solid #e6e6e6; background: #fafafa; color: #838383; font: 13px/16px "Liberation Sans", Arial, sans-serif; }
.dots { width: 24px; height: 26px; border: 1px solid #cfcfcf; border-radius: 4px; background: #fdfdfd; }
.dots:disabled { height: 22px; color: #838383; border-color: #e6e6e6; background: #fafafa; }
.swatch { width: 133px; border: 3px solid #9a9a9a; border-right-color: #fff; border-bottom-color: #fff; }
.f-angle { display: grid; grid-template-columns: 150px auto; grid-template-rows: 22px 24px 54px 28px 44px; align-items: center; padding-top: 12px; padding-bottom: 4px; }
.head { align-self: start; }
.chk { display: flex; align-items: center; gap: 3px; height: 16px; }
.chk input { appearance: none; width: 16px; height: 16px; margin: 0; border: 1px solid #626262; border-radius: 3px; background: #f5f5f5; }
.chk input:disabled { border-color: #bdbdbd; background: #fafafa; }
.chk input[type="radio"] { border-radius: 8px; }
.chk input[type="radio"]:checked { border: 5px solid #005fb8; background: #fff; }
.chk input[type="checkbox"]:checked { border-color: #005fb8; background: #005fb8 url("data:image/svg+xml,%3Csvg xmlns='http://www.w3.org/2000/svg' width='10' height='8'%3E%3Cpath d='M1 4l3 3 5-6' fill='none' stroke='%23fff'/%3E%3C/svg%3E") center no-repeat; }
.f-origin { margin-right: 2px; padding-top: 16px; padding-bottom: 8px; }
.f-origin > .chk + .chk { margin-top: 12px; }
.origin-more { display: flex; align-items: center; margin: 9px 0 0 29px; }
.origin-col { width: 222px; display: flex; flex-direction: column; gap: 9px; }
.origin-col .tool { gap: 9px; }
.corner-sel { width: 160px; margin-left: 39px; }
.preview { overflow: visible; margin-top: 20px; }
.tool { display: flex; align-items: center; gap: 17px; }
.tool button { width: 30px; height: 30px; display: flex; align-items: center; justify-content: center; border: 1px solid #cfcfcf; border-radius: 4px; background: #fdfdfd; }
.tool button:disabled { background: #f5f5f5; border-color: #e4e4e4; }
.tool .focus { border-color: #0078d4; }
.dlg-right { flex: 1; margin-top: 1px; }
.f-bounds { display: flex; flex-direction: column; gap: 15px; padding: 10px 0 15px 12px; }
.f-bounds legend, .f-opts legend { margin-left: -7px; }
.f-opts { display: flex; flex-direction: column; gap: 12px; margin-top: 9px; padding: 14px 21px 15px 13px; }
.f-opts .field { display: flex; flex-direction: column; gap: 4px; margin-top: 4px; }
.f-opts .field + .field { margin-top: 1px; }
.trow { display: flex; align-items: center; gap: 14px; padding-right: 2px; margin-top: 2px; }
.tval { width: 35px; height: 24px; border: 1px solid #e4e4e4; border-bottom-color: #868686; background: #fff; text-align: center; font: 13px/16px "Liberation Sans", Arial, sans-serif; padding: 0; }
.tslide { appearance: none; flex: 1; min-width: 0; margin: 0; height: 20px; background: linear-gradient(#d4d8d8, #d4d8d8) center / 100% 4px no-repeat; }
.tslide::-webkit-slider-thumb { appearance: none; width: 10px; height: 19px; background: #0078d7; }
.inherit { margin: 13px 0 0 13px; }
.dlg-foot { display: flex; gap: 14px; align-items: center; padding: 15px 19px 12px 17px; }
.push { width: 98px; height: 26px; border: 1px solid #cfcfcf; border-radius: 4px; background: #fdfdfd; }
.first { margin-left: auto; }
.more { width: 25px; height: 26px; }
```
